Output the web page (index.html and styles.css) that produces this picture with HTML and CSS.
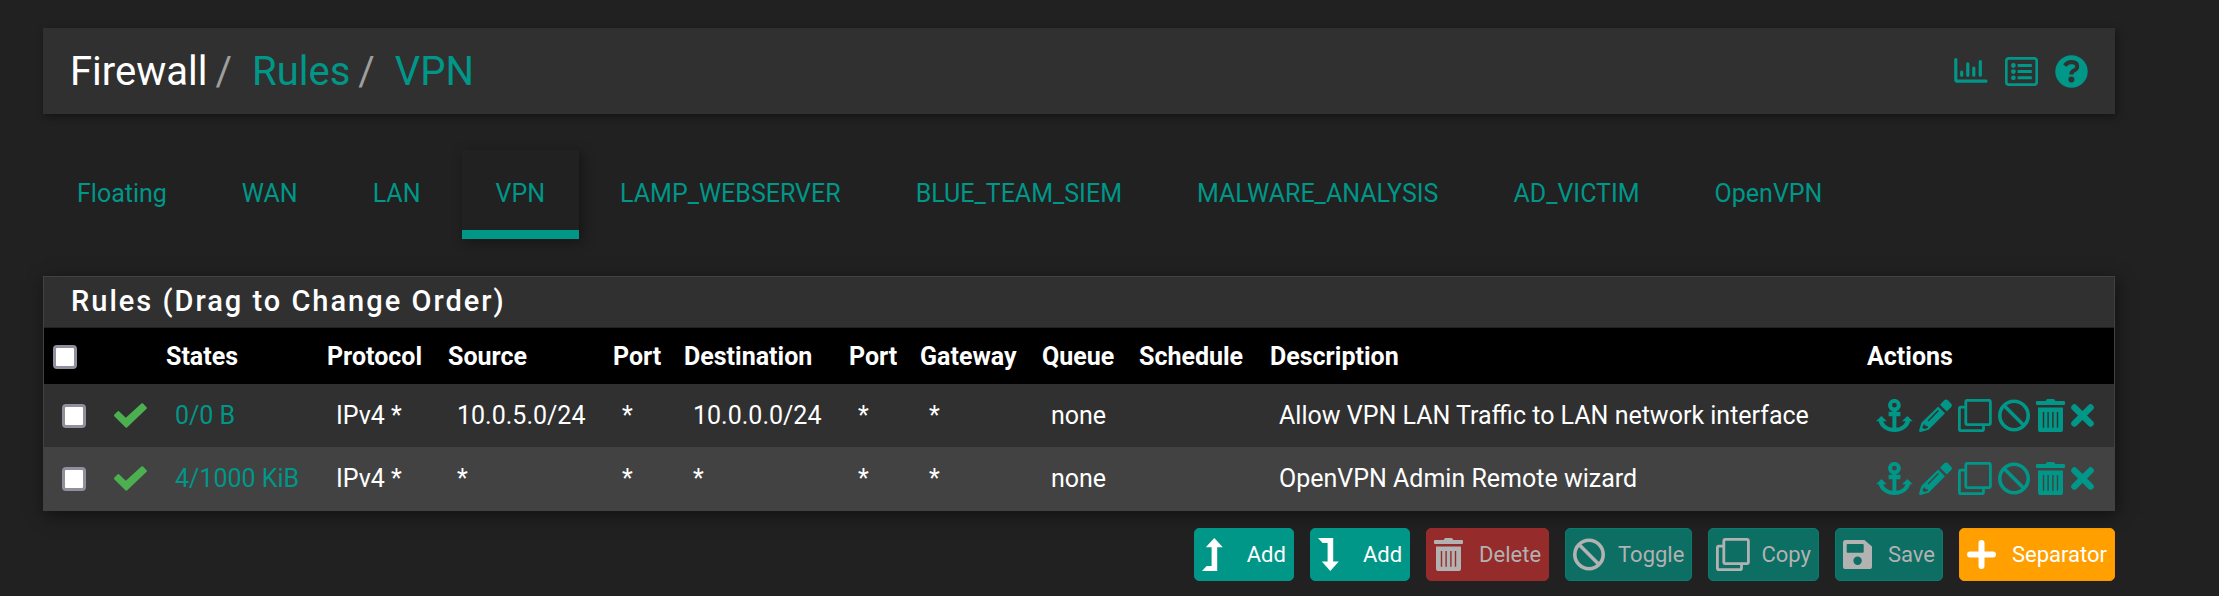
FILE: index.html
```html
<!DOCTYPE html>
<html lang="en">
<head>
    <meta charset="UTF-8">
    <meta name="viewport" content="width=device-width, initial-scale=1.0">
    <title>Firewall: Rules: VPN</title>
    <link rel="stylesheet" href="styles.css">
</head>
<body>

<!-- Icon set -->
<svg class="icon-defs" aria-hidden="true">
    <symbol id="i-chart" viewBox="0 0 34 26">
        <path d="M1.8 1.6V21.4Q1.8 23.2 3.6 23.2H32" fill="none" stroke="currentColor" stroke-width="3.2" stroke-linecap="round"/>
        <path d="M7.7 14.2V17.2M13.8 5.8V17.2M19.8 10.2V17.2M26.3 3.6V17.2" stroke="currentColor" stroke-width="3.2" stroke-linecap="round"/>
    </symbol>
    <symbol id="i-list" viewBox="0 0 33 29">
        <rect x="1.3" y="1.3" width="30.4" height="26.4" rx="2.6" fill="none" stroke="currentColor" stroke-width="2.7"/>
        <circle cx="8.4" cy="8.5" r="2.4"/><circle cx="8.4" cy="14.6" r="2.4"/><circle cx="8.4" cy="20.8" r="2.4"/>
        <path d="M12.6 7H26.8V10H12.6ZM12.6 13.1H26.8V16.1H12.6ZM12.6 19.3H26.8V22.3H12.6Z"/>
    </symbol>
    <symbol id="i-help" viewBox="0 0 33 33">
        <circle cx="16.5" cy="16.5" r="16.2"/>
        <path class="cut-line" d="M9.8 10.6Q12.4 7.1 16.6 7.1Q22.3 7.4 22.2 11.6Q22 14.4 18.4 15.8Q16.4 16.8 16.4 19.4"/>
        <circle class="cut" cx="16.4" cy="24.6" r="3"/>
    </symbol>
    <symbol id="i-check" viewBox="0 0 33 25">
        <path d="M.5 13.6Q-.4 12.4.4 11.6L3.8 8.3Q4.6 7.8 5.3 8.4L11.8 14.8L27.4.6Q28.3 0 29 .6L32.6 4.2Q33.2 5 32.6 5.8L13 24.4Q12.3 25 11.6 24.4Z"/>
    </symbol>
    <symbol id="i-anchor" viewBox="0 0 37 33">
        <path fill-rule="evenodd" d="M16.4 28.8V17.2H12.6V12.8H16.4V12.2A6.3 6.3 0 1 1 20.4 12.2V12.8H24.4V17.2H20.4V28.8C24.5 28.3 28.2 26 29.6 22.2H26L31.4 17L36.8 22.2H34.2C32.5 28.8 26 33 18.4 33S4.3 28.8 2.6 22.2H0L5.4 17L10.8 22.2H7.2C8.6 26 12.3 28.3 16.4 28.8ZM18.4 8.6A2.4 2.4 0 1 0 18.4 3.8A2.4 2.4 0 1 0 18.4 8.6Z"/>
    </symbol>
    <symbol id="i-pencil" viewBox="0 0 33 33">
        <path d="M21 5.7L25 1.4Q26.8-.4 28.8 1.2L32 4.4Q33.8 6.4 32 8.2L27.8 12.4Z"/>
        <path fill-rule="evenodd" d="M19.2 7.4L26 14.2L9.6 30.7L1.6 33Q-.2 33.2.1 31.4L2.4 23.8ZM18.9 11L8.6 21.4L9.6 22.4L19.9 12ZM4.8 25.4L3.3 28.2L5.1 30L8.7 29V26.9H6.3V25.4Z"/>
    </symbol>
    <symbol id="i-copy" viewBox="0 0 34 33">
        <rect x="7.8" y="1.3" width="24.6" height="24.4" rx="1.6" fill="none" stroke="currentColor" stroke-width="2.8"/>
        <path d="M7.6 8.1H2.8Q1.4 8.1 1.4 9.6V30.2Q1.4 31.6 2.8 31.6H24Q25.5 31.6 25.5 30.2V26" fill="none" stroke="currentColor" stroke-width="2.8"/>
    </symbol>
    <symbol id="i-ban" viewBox="0 0 32 33">
        <circle cx="16" cy="16.5" r="14.2" fill="none" stroke="currentColor" stroke-width="3.6"/>
        <path d="M6 6.5L26 26.5" stroke="currentColor" stroke-width="3.6"/>
    </symbol>
    <symbol id="i-trash" viewBox="0 0 29 33">
        <path d="M1 2H9.6L10.6.4Q10.9 0 11.4 0H17.6Q18.1 0 18.4.4L19.4 2H28Q29 2 29 3V5Q29 6 28 6H1Q0 6 0 5V3Q0 2 1 2Z"/>
        <path fill-rule="evenodd" d="M2 8.4H27V30.4Q27 33 24.4 33H4.6Q2 33 2 30.4ZM6.8 13H8.2V28.8H6.8ZM11.4 13H12.8V28.8H11.4ZM16.2 13H17.6V28.8H16.2ZM20.8 13H22.2V28.8H20.8Z"/>
    </symbol>
    <symbol id="i-times" viewBox="0 0 23 23">
        <path d="M3.4 3.4L19.6 19.6M19.6 3.4L3.4 19.6" stroke="currentColor" stroke-width="6.4" stroke-linecap="round"/>
    </symbol>
    <symbol id="i-up" viewBox="0 0 21 33">
        <path d="M12.3 0L20.8 9.2H15.2V33H0L4.6 28H9.6V9.2H3.8Z"/>
    </symbol>
    <symbol id="i-down" viewBox="0 0 21 33">
        <path d="M0 0H15.2V23.6H20.8L12.3 33L3.8 23.6H9.6V5H4.6Z"/>
    </symbol>
    <symbol id="i-save" viewBox="0 0 29 29">
        <path fill-rule="evenodd" d="M2.6 0H21.4L29 6.6V26.4Q29 29 26.4 29H2.6Q0 29 0 26.4V2.6Q0 0 2.6 0ZM4.6 4Q3.7 4 3.7 4.9V11.8Q3.7 12.7 4.6 12.7H19.8Q20.7 12.7 20.7 11.8V4.9Q20.7 4 19.8 4ZM14.6 16.6A4.2 4.2 0 1 0 14.6 25A4.2 4.2 0 1 0 14.6 16.6Z"/>
    </symbol>
    <symbol id="i-plus" viewBox="0 0 29 29">
        <path d="M14.5 3V26M3 14.5H26" stroke="currentColor" stroke-width="6" stroke-linecap="round"/>
    </symbol>
</svg>

<header class="page-header">
    <ol class="breadcrumb">
        <li>Firewall</li>
        <li><a href="#">Rules</a></li>
        <li><a href="#">VPN</a></li>
    </ol>
    <div class="context-links">
        <a href="#" aria-label="Status"><svg width="34" height="26"><use href="#i-chart"/></svg></a>
        <a href="#" aria-label="Log"><svg width="33" height="29"><use href="#i-list"/></svg></a>
        <a href="#" aria-label="Help"><svg width="33" height="33"><use href="#i-help"/></svg></a>
    </div>
</header>

<nav class="tabs">
    <a href="#" class="tab">Floating</a>
    <a href="#" class="tab">WAN</a>
    <a href="#" class="tab">LAN</a>
    <a href="#" class="tab active">VPN</a>
    <a href="#" class="tab">LAMP_WEBSERVER</a>
    <a href="#" class="tab">BLUE_TEAM_SIEM</a>
    <a href="#" class="tab">MALWARE_ANALYSIS</a>
    <a href="#" class="tab">AD_VICTIM</a>
    <a href="#" class="tab">OpenVPN</a>
</nav>

<main class="panel">
    <h2 class="panel-title">Rules (Drag to Change Order)</h2>
    <table class="rules">
        <colgroup>
            <col class="col-select"><col class="col-icon"><col class="col-states"><col class="col-protocol">
            <col class="col-address"><col class="col-port"><col class="col-address"><col class="col-port">
            <col class="col-gateway"><col class="col-queue"><col class="col-schedule"><col><col class="col-actions">
        </colgroup>
        <thead>
            <tr>
                <th><input type="checkbox" aria-label="Select all rules"></th>
                <th></th>
                <th>States</th>
                <th>Protocol</th>
                <th>Source</th>
                <th>Port</th>
                <th>Destination</th>
                <th>Port</th>
                <th>Gateway</th>
                <th>Queue</th>
                <th>Schedule</th>
                <th>Description</th>
                <th>Actions</th>
            </tr>
        </thead>
        <tbody>
            <tr>
                <td><input type="checkbox" aria-label="Select rule 1"></td>
                <td><svg class="pass" width="33" height="25"><use href="#i-check"/></svg></td>
                <td><a href="#">0/0 B</a></td>
                <td>IPv4 *</td>
                <td>10.0.5.0/24</td>
                <td>*</td>
                <td>10.0.0.0/24</td>
                <td>*</td>
                <td>*</td>
                <td>none</td>
                <td></td>
                <td>Allow VPN LAN Traffic to LAN network interface</td>
                <td>
                    <div class="actions">
                        <a href="#" aria-label="Move"><svg width="37" height="33"><use href="#i-anchor"/></svg></a>
                        <a href="#" aria-label="Edit"><svg width="33" height="33"><use href="#i-pencil"/></svg></a>
                        <a href="#" aria-label="Copy"><svg width="34" height="33"><use href="#i-copy"/></svg></a>
                        <a href="#" aria-label="Disable"><svg width="32" height="33"><use href="#i-ban"/></svg></a>
                        <a href="#" aria-label="Delete"><svg width="29" height="33"><use href="#i-trash"/></svg></a>
                        <a href="#" aria-label="Kill states"><svg width="23" height="23"><use href="#i-times"/></svg></a>
                    </div>
                </td>
            </tr>
            <tr>
                <td><input type="checkbox" aria-label="Select rule 2"></td>
                <td><svg class="pass" width="33" height="25"><use href="#i-check"/></svg></td>
                <td><a href="#">4/1000 KiB</a></td>
                <td>IPv4 *</td>
                <td>*</td>
                <td>*</td>
                <td>*</td>
                <td>*</td>
                <td>*</td>
                <td>none</td>
                <td></td>
                <td>OpenVPN Admin Remote wizard</td>
                <td>
                    <div class="actions">
                        <a href="#" aria-label="Move"><svg width="37" height="33"><use href="#i-anchor"/></svg></a>
                        <a href="#" aria-label="Edit"><svg width="33" height="33"><use href="#i-pencil"/></svg></a>
                        <a href="#" aria-label="Copy"><svg width="34" height="33"><use href="#i-copy"/></svg></a>
                        <a href="#" aria-label="Disable"><svg width="32" height="33"><use href="#i-ban"/></svg></a>
                        <a href="#" aria-label="Delete"><svg width="29" height="33"><use href="#i-trash"/></svg></a>
                        <a href="#" aria-label="Kill states"><svg width="23" height="23"><use href="#i-times"/></svg></a>
                    </div>
                </td>
            </tr>
        </tbody>
    </table>
</main>

<div class="buttons">
    <button type="button" class="btn"><span class="btn-icon"><svg width="21" height="33"><use href="#i-up"/></svg></span>Add</button>
    <button type="button" class="btn"><span class="btn-icon"><svg width="21" height="33"><use href="#i-down"/></svg></span>Add</button>
    <button type="button" class="btn btn-danger" disabled><span class="btn-icon"><svg width="29" height="33"><use href="#i-trash"/></svg></span>Delete</button>
    <button type="button" class="btn" disabled><span class="btn-icon"><svg width="32" height="33"><use href="#i-ban"/></svg></span>Toggle</button>
    <button type="button" class="btn" disabled><span class="btn-icon"><svg width="34" height="33"><use href="#i-copy"/></svg></span>Copy</button>
    <button type="button" class="btn" disabled><span class="btn-icon"><svg width="29" height="29"><use href="#i-save"/></svg></span>Save</button>
    <button type="button" class="btn btn-warning"><span class="btn-icon"><svg width="29" height="29"><use href="#i-plus"/></svg></span>Separator</button>
</div>

</body>
</html>
```
FILE: styles.css
```css
* { box-sizing: border-box; }
body { margin: 0; padding: 28px 104px 14px 43px; background-color: #212121; color: white; font-family: Roboto, sans-serif; font-size: 25px; line-height: 36px; }
a { color: #009688; text-decoration: none; }
svg { display: block; fill: currentColor; }
.icon-defs { position: absolute; width: 0; height: 0; }
.cut { fill: #303030; }
.cut-line { fill: none; stroke: #303030; stroke-width: 4px; }

.page-header { display: flex; justify-content: space-between; align-items: center; height: 86px; padding: 0 27px; background-color: #303030; box-shadow: 2px 3px 8px rgba(0, 0, 0, 0.4); }
.breadcrumb { display: flex; margin: 0; padding: 2px 0 0; list-style: none; font-size: 40px; line-height: 48px; }
.breadcrumb li + li::before { content: "/"; padding: 0 20px 0 8px; color: #9e9e9e; }
.context-links { display: flex; align-items: center; gap: 17px; }

.tabs { display: flex; gap: 7px; margin: 36px 0 37px; }
.tab { height: 89px; padding: 26px 34px 0; border-bottom: 9px solid transparent; }
.tab.active { border-bottom-color: #009688; box-shadow: 3px 3px 12px rgba(0, 0, 0, 0.4); }

.panel { border: 1px solid #424242; background-color: #303030; box-shadow: 2px 4px 16px rgba(0, 0, 0, 0.5); }
.panel-title { margin: 0; padding: 6px 27px 8px; border-bottom: 1px solid #212121; font-size: 29px; font-weight: 500; line-height: 36px; letter-spacing: 2px; }

.rules { width: 100%; table-layout: fixed; border-collapse: collapse; }
.rules th { height: 56px; padding: 2px 0 0 9px; background-color: black; text-align: left; white-space: nowrap; }
.rules td { height: 63px; padding: 0 0 0 18px; white-space: nowrap; }
.rules tbody tr:nth-child(even) { background-color: #424242; }
.col-select { width: 52px; }
.col-icon { width: 61px; }
.col-states { width: 161px; }
.col-protocol { width: 121px; }
.col-address { width: 165px; }
.col-port { width: 71px; }
.col-gateway { width: 122px; }
.col-queue { width: 97px; }
.col-schedule { width: 131px; }
.col-actions { width: 256px; }
.rules input { appearance: none; display: block; width: 24px; height: 24px; margin: 0; border: 3px solid #8f8f9d; border-radius: 4px; background-color: white; }
.rules input:checked { background-color: #009688; }
.pass { color: #4caf50; }
.actions { display: flex; align-items: center; gap: 6px; }

.buttons { display: flex; justify-content: flex-end; gap: 16px; margin-top: 17px; }
.btn { display: flex; align-items: center; height: 53px; padding: 0 7px; border: 1px solid #009688; border-radius: 5px; background-color: #009688; color: white; font-family: inherit; font-size: 22px; cursor: pointer; }
.btn:disabled { border-color: #0b7a6f; background-color: #0d6e64; color: #b2b2b2; cursor: default; }
.btn-danger:disabled { border-color: #982c2c; background-color: #952b2b; }
.btn-warning { border-color: #ff9800; background-color: #ffa000; }
.btn-icon { width: 45px; }
```
